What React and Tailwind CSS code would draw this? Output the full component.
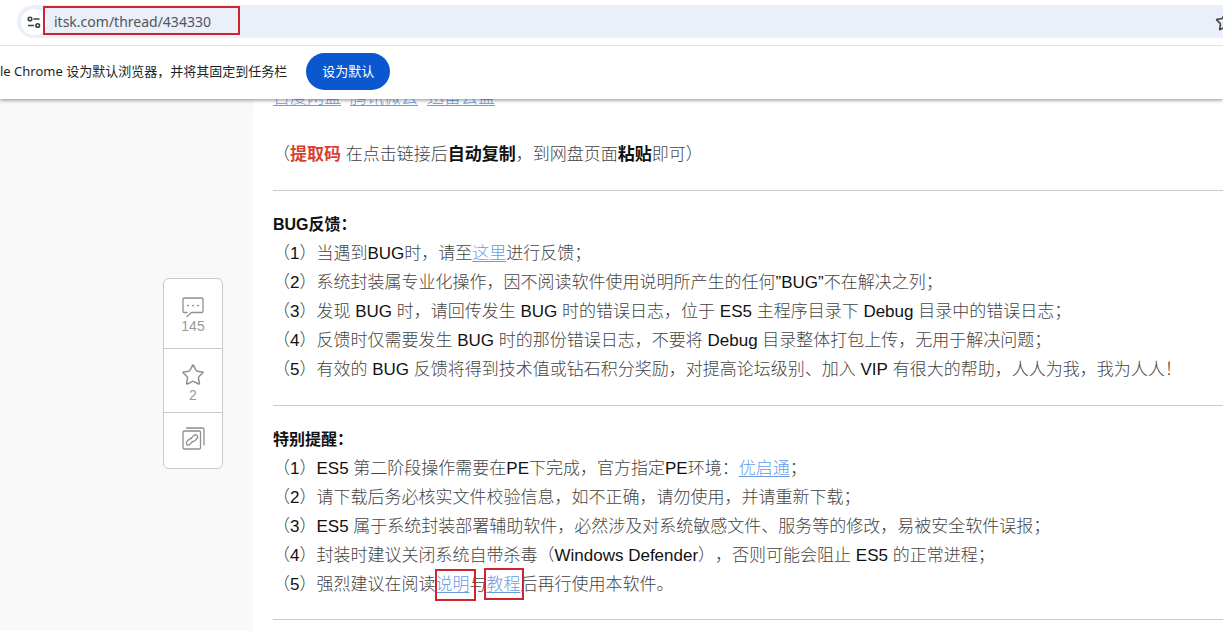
import React from "react";
import { Star } from "lucide-react";

const link = "text-[#6a9be8] underline decoration-[#6a9be0] underline-offset-2";

function Mark({ className }) {
  return <span aria-hidden="true" className={"pointer-events-none absolute border-2 border-[#cf2430] " + className} />;
}

function MarkedLink({ children, box }) {
  return (
    <span className="relative inline-block">
      <a href="#" className={link}>{children}</a>
      <Mark className={box} />
    </span>
  );
}

function TuneIcon() {
  return (
    <svg width="14" height="14" viewBox="0 0 14 14" fill="none" stroke="#3c4043" strokeWidth="1.6" aria-hidden="true">
      <circle cx="3" cy="4" r="1.8" />
      <path d="M6.5 4H12.5M1 10.5H7" />
      <circle cx="10.7" cy="10.5" r="1.8" />
    </svg>
  );
}

function CommentIcon() {
  return (
    <svg width="22" height="21" viewBox="0 0 22 21" fill="none" stroke="#8f8f8f" strokeWidth="1.3" strokeLinecap="round" strokeLinejoin="round" aria-hidden="true">
      <path d="M5 15.500H2.200Q1 15.500 1 14.300V2.200Q1 1 2.200 1H19.800Q21 1 21 2.200V14.300Q21 15.500 19.800 15.500H9.500L5 19.500" />
      <path d="M5.800 8.500H6.200M10.800 8.500H11.200M15.800 8.500H16.200" strokeWidth="1.700" />
    </svg>
  );
}

function CopyLinkIcon() {
  return (
    <svg width="23" height="23" viewBox="0 0 23 23" fill="none" stroke="#8f8f8f" strokeWidth="1.3" strokeLinecap="round" strokeLinejoin="round" aria-hidden="true">
      <rect x="1" y="4" width="17.500" height="18" rx="1.200" />
      <path d="M4.500 1H20.500Q22 1 22 2.500V18" />
      <path d="M9.200 11.200L12 8.400Q13.600 7 15 8.400T15 11.500L12.500 14Q11.500 14.900 10.300 14.400" />
      <path d="M10.400 14.800L7.800 17.400Q6.200 18.800 4.900 17.500T4.900 14.400L7.300 12Q8.300 11.200 9.400 11.700" />
    </svg>
  );
}

function Section({ title, items }) {
  return (
    <section>
      <h2 className="text-base leading-[29px] font-bold text-[#111]">{title}</h2>
      <ul>
        {items.map((item, i) => (
          <li key={i}>（<Latin>{i + 1}</Latin>）{item}</li>
        ))}
      </ul>
    </section>
  );
}

function Latin({ children }) {
  return <span className="font-normal text-[#111]">{children}</span>;
}

const bugItems = [
  <>当遇到<Latin>BUG</Latin>时，请至<a href="#" className={link}>这里</a>进行反馈；</>,
  <>系统封装属专业化操作，因不阅读软件使用说明所产生的任何<Latin>”BUG”</Latin>不在解决之列；</>,
  <>发现 <Latin>BUG</Latin> 时，请回传发生 <Latin>BUG</Latin> 时的错误日志，位于 <Latin>ES5</Latin> 主程序目录下 <Latin>Debug</Latin> 目录中的错误日志；</>,
  <>反馈时仅需要发生 <Latin>BUG</Latin> 时的那份错误日志，不要将 <Latin>Debug</Latin> 目录整体打包上传，无用于解决问题；</>,
  <>有效的 <Latin>BUG</Latin> 反馈将得到技术值或钻石积分奖励，对提高论坛级别、加入 <Latin>VIP</Latin> 有很大的帮助，人人为我，我为人人！</>,
];

const noticeItems = [
  <><Latin>ES5</Latin> 第二阶段操作需要在<Latin>PE</Latin>下完成，官方指定<Latin>PE</Latin>环境：<a href="#" className={link}>优启通</a>；</>,
  <>请下载后务必核实文件校验信息，如不正确，请勿使用，并请重新下载；</>,
  <><Latin>ES5</Latin> 属于系统封装部署辅助软件，必然涉及对系统敏感文件、服务等的修改，易被安全软件误报；</>,
  <>封装时建议关闭系统自带杀毒（<Latin>Windows Defender</Latin>），否则可能会阻止 <Latin>ES5</Latin> 的正常进程；</>,
  <>强烈建议在阅读<MarkedLink box="left-0 -top-px h-8 w-[41px]">说明</MarkedLink>与<MarkedLink box="-left-0.5 -top-0.5 h-8 w-10">教程</MarkedLink>后再行使用本软件。</>,
];

const sideButton = "flex w-full flex-col items-center border-[#c9c9c9]";

export default function App() {
  return (
    <div className="h-screen overflow-hidden bg-white font-['Liberation_Sans','Noto_Sans_CJK_SC',sans-serif] [text-spacing-trim:space-all]" lang="zh-CN">
      <header className="relative z-10 overflow-x-clip bg-white font-['Noto_Sans','Noto_Sans_CJK_SC',sans-serif] shadow-[0_1px_4px_rgba(0,0,0,0.45)]">
        <div className="border-b border-[#dfe1e3] pt-[5px] pb-[7px] pl-[17px]">
          <div className="relative -mr-3 flex h-[33px] items-center rounded-l-full bg-[#ebeff9] pl-1">
            <button aria-label="网站信息" className="flex size-[26px] items-center justify-center rounded-full bg-white">
              <TuneIcon />
            </button>
            <input aria-label="地址" defaultValue="itsk.com/thread/434330" className="ml-[7px] min-w-0 flex-1 bg-transparent text-sm text-[#50545a] outline-none" />
            <Mark className="top-px left-[26px] h-[29px] w-[197px]" />
            <button aria-label="为此标签页添加书签"><Star size={20} strokeWidth={2} color="#474747" /></button>
          </div>
        </div>
        <div className="flex h-[53px] items-center gap-[19px] pb-0.5 text-[13px] text-[#1f1f1f]">
          <p className="whitespace-nowrap">le Chrome 设为默认浏览器，并将其固定到任务栏</p>
          <button className="h-[37px] rounded-full bg-[#0b57d0] px-4 whitespace-nowrap text-white">设为默认</button>
        </div>
      </header>

      <div className="-mt-4 flex min-h-screen bg-[#f9f9f9]">
        <aside className="flex w-[253px] shrink-0 justify-end pt-[195px] pr-[30px]">
          <div className="flex w-[60px] flex-col self-start overflow-hidden rounded-md border border-[#c9c9c9] bg-white text-sm leading-4 text-[#999]">
            <button className={sideButton + " h-[70px] border-b pt-[18px]"}>
              <CommentIcon />
              145
            </button>
            <button className={sideButton + " h-16 border-b pt-3.5"}>
              <Star size={24} strokeWidth={1.5} color="#8f8f8f" />
              2
            </button>
            <button aria-label="复制链接" className={sideButton + " h-[55px] pt-3.5"}>
              <CopyLinkIcon />
            </button>
          </div>
        </aside>

        <main className="min-w-0 flex-1 overflow-hidden bg-white pl-5 text-[17px] leading-[29px] font-light whitespace-nowrap text-[#444]">
          <p className="flex gap-[9px]">
            <a href="#" className={link}>百度网盘</a>
            <a href="#" className={link}>腾讯微云</a>
            <a href="#" className={link}>迅雷云盘</a>
          </p>
          <p className="mt-7">
            （<b className="font-bold text-[#d9402f]">提取码</b> 在点击链接后<b className="font-bold text-[#111]">自动复制</b>，到网盘页面<b className="font-bold text-[#111]">粘贴</b>即可）
          </p>
          <hr className="mt-[21px] mb-[19px] border-[#ccc]" />
          <Section title="BUG反馈：" items={bugItems} />
          <hr className="mt-[21px] mb-[19px] border-[#ccc]" />
          <Section title="特别提醒：" items={noticeItems} />
          <hr className="mt-5 border-[#ccc]" />
        </main>
      </div>
    </div>
  );
}
